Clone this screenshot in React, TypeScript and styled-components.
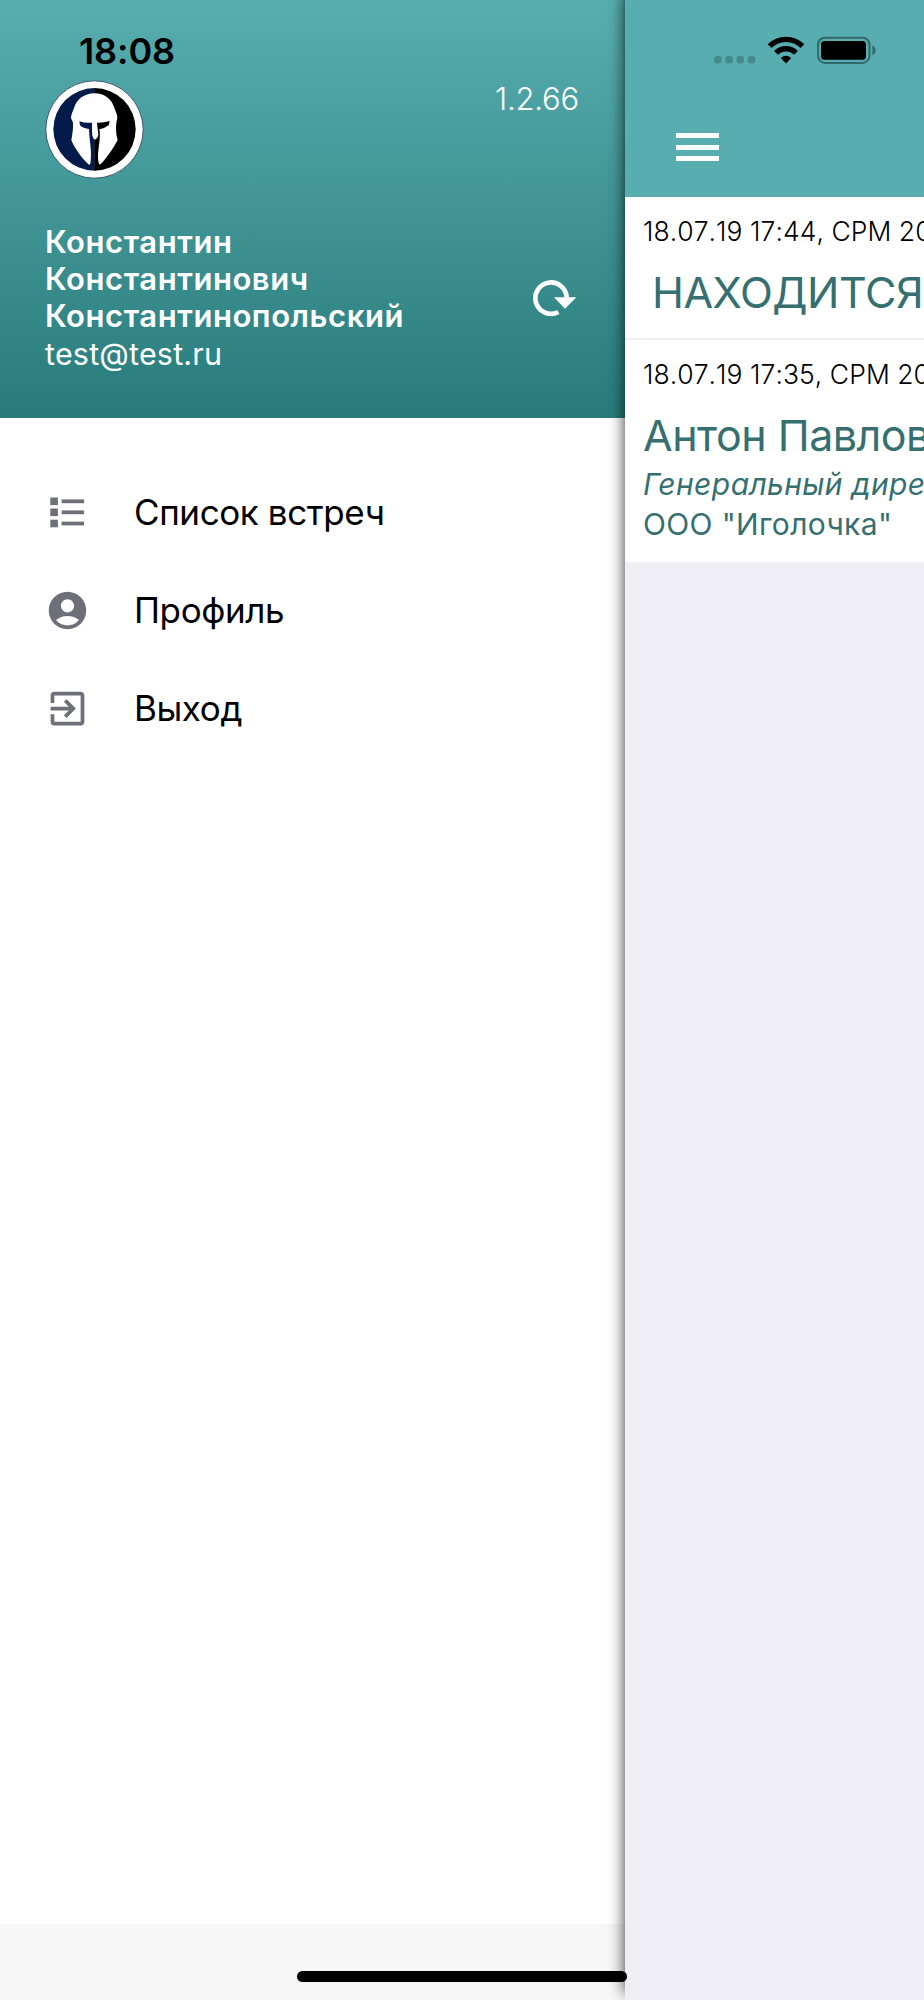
import React from 'react';
import styled, { createGlobalStyle } from 'styled-components';
import { MdAccountCircle, MdExitToApp } from 'react-icons/md';

const GlobalStyle = createGlobalStyle`
  body {
    margin: 0;
    font-family: Inter, 'Liberation Sans', sans-serif;
    font-feature-settings: 'calt' 0;
  }
`;

const Screen = styled('div')`
  position: relative;
  display: flex;
  width: 924px;
  height: 2000px;
  overflow: hidden;
  background: #fff;
`;

const Drawer = styled('aside')`
  display: flex;
  flex-direction: column;
  flex: 0 0 625px;
`;

const DrawerHeader = styled('header')`
  display: flex;
  flex-direction: column;
  box-sizing: border-box;
  height: 418px;
  padding: 30px 46px 0 45px;
  background: linear-gradient(#57aeaf, #297b7b);
  color: #fff;
`;

const Clock = styled('time')`
  height: 50px;
  padding-left: 34px;
  font-size: 36px;
  line-height: 42px;
  font-weight: 600;
  letter-spacing: -0.1px;
  color: #000;
`;

const HeaderRow = styled('div')<{ $height: number; $center?: boolean }>`
  display: flex;
  justify-content: space-between;
  align-items: ${p => p.$center ? 'center' : 'flex-start'};
  height: ${p => p.$height}px;
`;

const Version = styled('span')`
  font-size: 31px;
  line-height: 38px;
  font-weight: 300;
  letter-spacing: -0.2px;
`;

const UserName = styled('div')`
  font-size: 31px;
  line-height: 37.3px;
  font-weight: 600;
  letter-spacing: 0.55px;
`;

const Email = styled('div')`
  font-size: 30.5px;
  line-height: 39px;
  letter-spacing: 0.2px;
`;

const RefreshButton = styled('button')`
  display: block;
  width: 44px;
  height: 38px;
  margin: 0 2px 0 0;
  padding: 0;
  border: 0;
  background: none;
`;

const Menu = styled('nav')`
  flex: 1;
  padding: 45px 44.5px 0;
`;

const MenuItem = styled('a')`
  display: flex;
  align-items: center;
  height: 98px;
  font-size: 35px;
  letter-spacing: -0.4px;
  color: #000;

  svg {
    flex: none;
    margin-right: 44.5px;
    color: #6e7079;
  }
`;

const DrawerFooter = styled('footer')`
  height: 76px;
  background: #f7f7f7;
`;

const Page = styled('main')`
  flex: 1;
  min-width: 0;
  height: 2000px;
  background: #efeef4;
  box-shadow: 0 -8px 15px rgba(0, 0, 0, 0.8);
`;

const NavBar = styled('div')`
  box-sizing: border-box;
  height: 197px;
  padding-top: 36px;
  background: #57adaf;
`;

const StatusIcons = styled('div')`
  display: flex;
  height: 97px;
  padding-left: 89px;
`;

const Burger = styled('div')`
  display: flex;
  flex-direction: column;
  justify-content: space-between;
  width: 43px;
  height: 28px;
  margin-left: 51px;
`;

const BurgerLine = styled('i')`
  height: 5px;
  background: #fff;
`;

const Card = styled('article')<{ $height: number }>`
  box-sizing: border-box;
  height: ${p => p.$height}px;
  padding: 17px 0 0 18px;
  background: #fff;
  color: #356f6f;
  white-space: nowrap;
  overflow: hidden;

  & + & {
    margin-top: 2px;
  }
`;

const CardDate = styled('div')`
  height: 52px;
  font-size: 26.5px;
  line-height: 34px;
  font-weight: 300;
  font-kerning: none;
  letter-spacing: 0.05px;
  color: #000;
`;

const CardTitle = styled('div')<{ $indent?: boolean }>`
  padding-left: ${p => p.$indent ? 9 : 0}px;
  margin-bottom: 3px;
  font-size: 43px;
  line-height: 52px;
  letter-spacing: -0.5px;
`;

const CardLine = styled('div')<{ $italic?: boolean }>`
  font-size: 30px;
  line-height: 40px;
  letter-spacing: 0.35px;
  font-style: ${p => p.$italic ? 'italic' : 'normal'};
`;

const HomeIndicator = styled('div')`
  position: absolute;
  left: 297px;
  bottom: 18px;
  width: 330px;
  height: 11px;
  border-radius: 6px;
  background: #000;
`;

const LogoSvg = styled('svg')`
  margin-left: -0.5px;
`;

function Logo() {
  return (
    <LogoSvg width="99" height="99" viewBox="43 30 297 297">
      <circle cx="191.5" cy="178.5" r="146" fill="#fff" stroke="#243e5c" strokeWidth="2.5" />
      <path d="M192 54a124 124 0 0 0 0 248z" fill="#041a4b" />
      <path d="M191 54a124 124 0 0 1 0 248z" fill="#000" />
      <path
        fill="#fff"
        d="M192 70C160 71 138 87 130 114C127 124 121 133 121 144L127 158C128 175 125 194 122 211C131 232 150 262 175 284Q180 284 180 272C183 243 178 220 176 194L175 177Q158 176 148 166L146 154Q164 160 184 158L184 184Q183 198 190 208Q199 210 203 195L199 158Q216 159 237 153L234 166Q224 174 206 178C211 202 203 230 202 260Q202 277 207 284Q213 281 218 274C234 255 250 231 261 210C256 193 255 174 257 158L260 144C260 132 254 123 251 113C242 86 222 71 192 70Z"
      />
    </LogoSvg>
  );
}

function RefreshIcon() {
  return (
    <svg width="44" height="38" viewBox="0 0 132 114">
      <path d="M76 99A47 47 0 1 1 101 56" fill="none" stroke="#fff" strokeWidth="14" />
      <path d="M63 55H130L96 89Z" fill="#fff" />
    </svg>
  );
}

function ListIcon() {
  return (
    <svg width="45" height="45" viewBox="0 0 45 45" fill="currentColor">
      {[7.5, 18.5, 29.7].map(y => (
        <g key={y}>
          <rect x="5.3" y={y} width="7.6" height="7.6" />
          <rect x="16.6" y={y + 1.9} width="22.5" height="3.8" />
        </g>
      ))}
    </svg>
  );
}

function StatusBar() {
  return (
    <StatusIcons>
      <svg width="164" height="28" viewBox="0 0 164 28">
        {[0, 11.2, 22.4, 33.6].map(x => (
          <rect key={x} x={x + 0.2} y="20" width="7.4" height="7.4" rx="2.6" fill="#468a8c" />
        ))}
        <g fill="none" stroke="#000" strokeWidth="5.4">
          <path d="M55.6 10.2A23 23 0 0 1 88.4 10.2" />
          <path d="M62 16.9A14 14 0 0 1 82 16.9" />
        </g>
        <path d="M72 27.5L66.8 22.1Q72 17.5 77.2 22.1Z" />
        <rect x="104" y="1.7" width="51.5" height="25.2" rx="7" fill="none" stroke="#346869" strokeWidth="2" />
        <rect x="107" y="5" width="45" height="18.8" rx="3.6" />
        <path d="M158.4 9.5Q161.6 11 161.6 14.2Q161.6 17.5 158.4 19Z" fill="#346869" />
      </svg>
    </StatusIcons>
  );
}

function App(): React.ReactElement {
  return (
    <Screen>
      <GlobalStyle />
      <Drawer>
        <DrawerHeader>
          <Clock>18:08</Clock>
          <HeaderRow $height={142}>
            <Logo />
            <Version>1.2.66</Version>
          </HeaderRow>
          <HeaderRow $height={152} $center>
            <div>
              <UserName>Константин<br />Константинович<br />Константинопольский</UserName>
              <Email>test@test.ru</Email>
            </div>
            <RefreshButton>
              <RefreshIcon />
            </RefreshButton>
          </HeaderRow>
        </DrawerHeader>
        <Menu>
          <MenuItem><ListIcon />Список встреч</MenuItem>
          <MenuItem><MdAccountCircle size={45} />Профиль</MenuItem>
          <MenuItem><MdExitToApp size={45} />Выход</MenuItem>
        </Menu>
        <DrawerFooter />
      </Drawer>
      <Page>
        <NavBar>
          <StatusBar />
          <Burger>
            <BurgerLine />
            <BurgerLine />
            <BurgerLine />
          </Burger>
        </NavBar>
        <Card $height={141}>
          <CardDate>18.07.19 17:44, СРМ 20</CardDate>
          <CardTitle $indent>НАХОДИТСЯ</CardTitle>
        </Card>
        <Card $height={222}>
          <CardDate>18.07.19 17:35, СРМ 20</CardDate>
          <CardTitle>Антон Павлов</CardTitle>
          <CardLine $italic>Генеральный дире</CardLine>
          <CardLine>ООО "Иголочка"</CardLine>
        </Card>
      </Page>
      <HomeIndicator />
    </Screen>
  );
}

export default App;
